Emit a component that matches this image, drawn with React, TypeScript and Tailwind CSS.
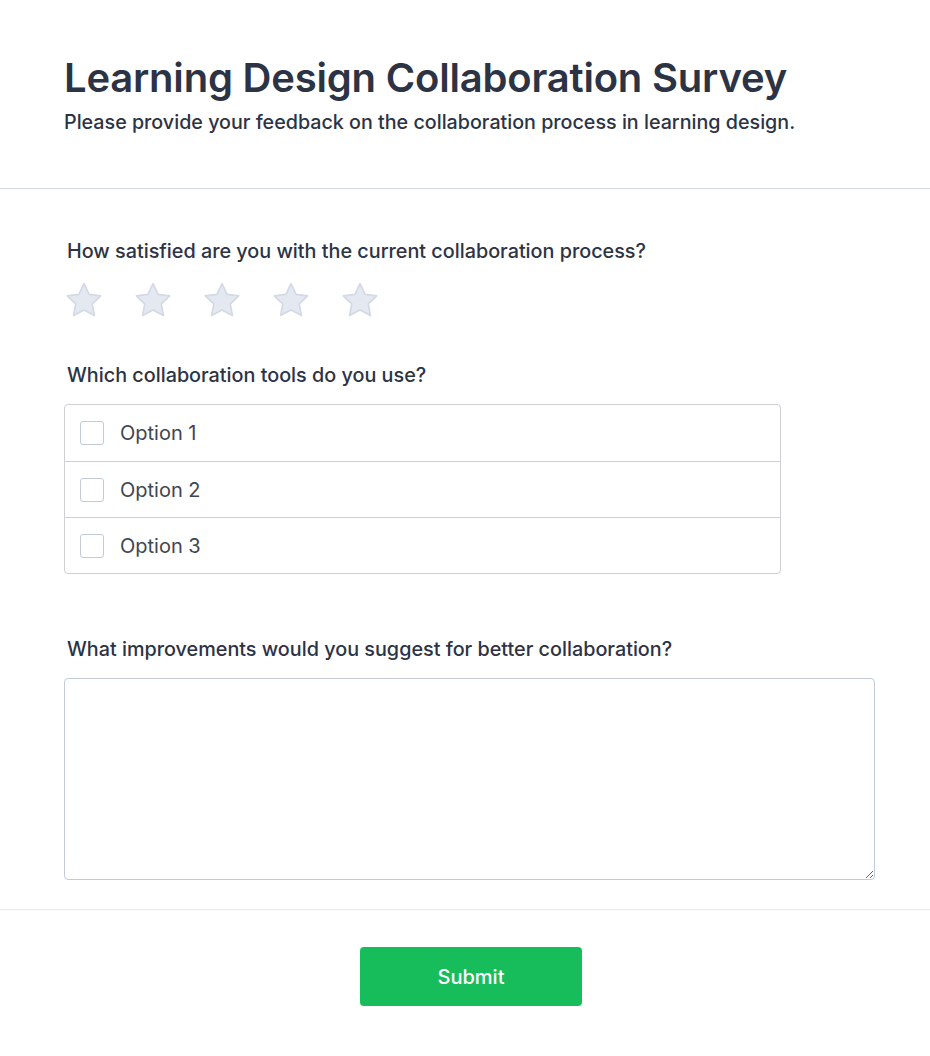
import React from 'react';

const Star = () => (
  <svg width="40" height="38" viewBox="0 0 24 23" className="shrink-0">
    <path
      d="M12 1.6l3.1 6.5 7 .9-5.1 4.9 1.3 7-6.3-3.4-6.3 3.4 1.3-7L1.9 9l7-.9z"
      fill="#e3e8f1"
      stroke="#d3d9e5"
      strokeWidth="1"
      strokeLinejoin="round"
    />
  </svg>
);

const options = ['Option 1', 'Option 2', 'Option 3'];

export default function App() {
  return (
    <div className="min-h-screen bg-white text-[#2c3345]" style={{ fontFamily: 'Inter, "Noto Sans", sans-serif' }}>
      {/* Header */}
      <div className="px-16 pt-[52px] pb-[53px] border-b border-[#d3d8e6]">
        <h1 className="text-[40px] leading-[52px] font-semibold tracking-[-0.2px]">Learning Design Collaboration Survey</h1>
        <p className="text-[19.7px] leading-[26px] font-medium mt-[5px]">
          Please provide your feedback on the collaboration process in learning design.
        </p>
      </div>

      {/* Questions */}
      <div className="px-16 pt-[49px] pb-[29px] border-b border-[#e6e6f0]">
        <div>
          <label className="block px-[3px] text-[19.8px] leading-[26px] font-medium">
            How satisfied are you with the current collaboration process?
          </label>
          <div className="flex gap-[29px] mt-[17px]">
            {[0, 1, 2, 3, 4].map((i) => (
              <Star key={i} />
            ))}
          </div>
        </div>

        <div className="mt-[43px]">
          <label className="block px-[3px] text-[19.8px] leading-[26px] font-medium">
            Which collaboration tools do you use?
          </label>
          <div className="mt-[16px] w-[717px] border border-[#cfcfd4] rounded-[4px]">
            {options.map((o, i) => (
              <div
                key={o}
                className={`flex items-center gap-4 px-[15px] h-[56px] ${i > 0 ? 'border-t border-[#cfcfd4]' : ''}`}
              >
                <span className="w-6 h-6 rounded-[3px] border border-[#c3cad8] bg-white shrink-0" />
                <span className="text-[20px] text-[#3e4652]">{o}</span>
              </div>
            ))}
          </div>
        </div>

        <div className="mt-[62px]">
          <label className="block px-[3px] text-[19.8px] leading-[26px] font-medium">
            What improvements would you suggest for better collaboration?
          </label>
          <textarea className="mt-[16px] block w-[811px] h-[202px] border border-[#c3cad8] rounded-[4px] outline-none p-3" />
        </div>
      </div>

      {/* Footer */}
      <div className="flex justify-center pl-3 pt-[37px] pb-[50px]">
        <button className="w-[222px] h-[59px] rounded-[4px] bg-[#18bd5b] text-white text-[20px] font-medium">
          Submit
        </button>
      </div>
    </div>
  );
}
